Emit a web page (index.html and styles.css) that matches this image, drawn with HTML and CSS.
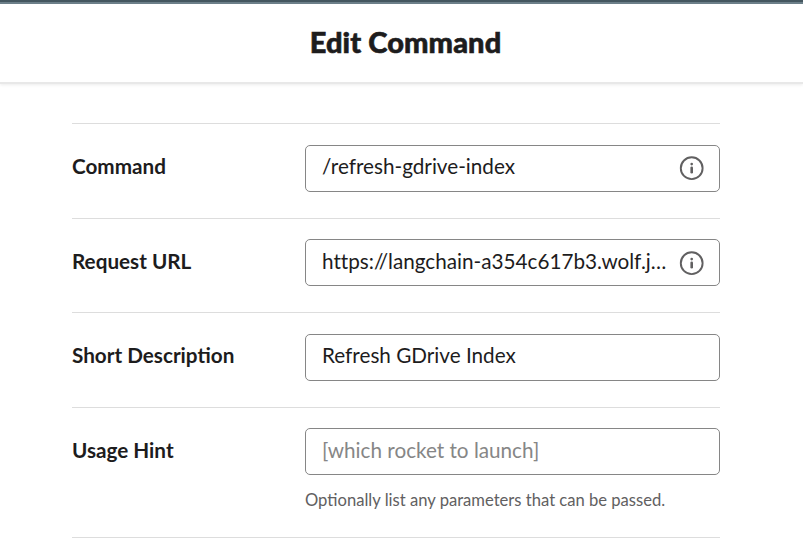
FILE: index.html
```html
<!DOCTYPE html>
<html lang="en">
<head>
<meta charset="utf-8">
<title>Edit Command</title>
<link rel="stylesheet" href="styles.css">
</head>
<body>
<header class="header"><h1 class="title">Edit Command</h1></header>
<main class="form">
  <div class="row">
    <div class="label">Command</div>
    <div class="field"><div class="input"><span class="value">/refresh-gdrive-index</span>
      <svg class="info" viewBox="0 0 24 24"><circle cx="11.7" cy="12.2" r="10.9"/><path d="M11.7 11.7v4.5"/><circle class="dot" cx="11.7" cy="8.1" r="1.3"/></svg></div></div>
  </div>
  <div class="row">
    <div class="label">Request URL</div>
    <div class="field"><div class="input"><span class="value">https://langchain-a354c617b3.wolf.j…</span>
      <svg class="info" viewBox="0 0 24 24"><circle cx="11.7" cy="12.2" r="10.9"/><path d="M11.7 11.7v4.5"/><circle class="dot" cx="11.7" cy="8.1" r="1.3"/></svg></div></div>
  </div>
  <div class="row">
    <div class="label">Short Description</div>
    <div class="field"><div class="input"><span class="value">Refresh GDrive Index</span></div></div>
  </div>
  <div class="row row-hint">
    <div class="label">Usage Hint</div>
    <div class="field"><div class="input"><span class="value placeholder">[which rocket to launch]</span></div>
      <p class="hint">Optionally list any parameters that can be passed.</p></div>
  </div>
</main>
</body>
</html>
```
FILE: styles.css
```css
* { box-sizing: border-box; }
body { margin: 0; background: #fff; color: #1d1c1d; font-family: Lato, sans-serif; }
.header { height: 84px; background: linear-gradient(#44565f 2px, #6c7f89 2px, #6c7f89 4px, #fff 4px); border-bottom: 2px solid #e8e8e8; box-shadow: 0 1px 3px rgba(0,0,0,.08); display: flex; justify-content: center; padding: 23px 0 0 8px; }
.title { margin: 0; font-size: 29px; line-height: 38px; font-weight: 900; letter-spacing: .1px; -webkit-text-stroke: .6px #1d1c1d; }
.form { width: 648px; margin: 39px 0 0 72px; }
.row { display: flex; height: 94.5px; border-top: 1px solid #ddd; padding-top: 20.5px; }
.label { width: 233px; padding-top: .4px; font-size: 20.7px; line-height: 43px; font-weight: 700; }
.row:nth-child(even) .label { padding-top: 1px; }
.field { width: 415px; }
.input { height: 47px; border: 1px solid #868686; border-radius: 5px; display: flex; align-items: center; padding: 0 15px 4px 16px; font-size: 20.7px; font-variant-ligatures: none; }
.value { flex: 1; min-width: 0; white-space: nowrap; line-height: 30px; }
.placeholder { color: #868686; }
.info { width: 24px; height: 24px; margin: 4px 0 0 8px; flex: none; overflow: visible; fill: none; stroke: #616061; stroke-width: 1.9; }
.info path { stroke-width: 2.6; stroke-linecap: round; }
.info .dot { fill: #616061; stroke: none; }
.hint { margin: 14px 0 0; font-size: 16.6px; line-height: 22px; color: #616061; }
.row-hint { height: 131px; border-bottom: 1px solid #ddd; }
```
